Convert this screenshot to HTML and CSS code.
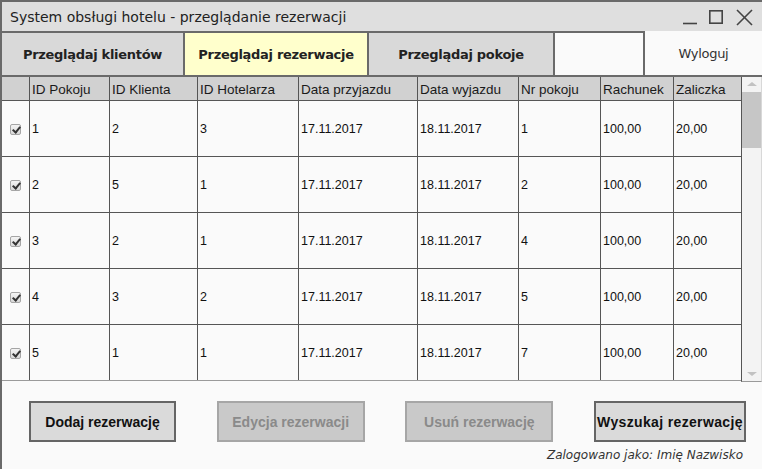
FILE: index.html
```html
<!DOCTYPE html>
<html lang="pl">
<head>
<meta charset="utf-8">
<title>System obsługi hotelu</title>
<link rel="stylesheet" href="styles.css">
</head>
<body>
<div class="window">
  <div class="titlebar">
    <span class="title">System obsługi hotelu - przeglądanie rezerwacji</span>
    <svg class="wincontrols" width="80" height="20" viewBox="0 0 80 20">
      <line x1="3" y1="16.5" x2="17" y2="16.5" stroke="#444" stroke-width="1.6"/>
      <rect x="29.8" y="3.8" width="12.4" height="12.4" fill="none" stroke="#444" stroke-width="1.6"/>
      <line x1="57" y1="3" x2="72" y2="18" stroke="#444" stroke-width="1.6"/>
      <line x1="72" y1="3" x2="57" y2="18" stroke="#444" stroke-width="1.6"/>
    </svg>
  </div>
  <div class="tabs">
    <div class="tab tab-1">Przeglądaj klientów</div>
    <div class="tab tab-2 active">Przeglądaj rezerwacje</div>
    <div class="tab tab-3">Przeglądaj pokoje</div>
    <div class="tab-gap"></div>
    <div class="logout">Wyloguj</div>
  </div>
  <div class="tablearea">
    <div class="grid">
      <div class="row head">
        <div class="cell"></div>
        <div class="cell">ID Pokoju</div>
        <div class="cell">ID Klienta</div>
        <div class="cell">ID Hotelarza</div>
        <div class="cell">Data przyjazdu</div>
        <div class="cell">Data wyjazdu</div>
        <div class="cell">Nr pokoju</div>
        <div class="cell">Rachunek</div>
        <div class="cell">Zaliczka</div>
      </div>
      <div class="row">
        <div class="cell cb"><span class="check"></span></div>
        <div class="cell">1</div><div class="cell">2</div><div class="cell">3</div>
        <div class="cell">17.11.2017</div><div class="cell">18.11.2017</div>
        <div class="cell">1</div><div class="cell">100,00</div><div class="cell">20,00</div>
      </div>
      <div class="row">
        <div class="cell cb"><span class="check"></span></div>
        <div class="cell">2</div><div class="cell">5</div><div class="cell">1</div>
        <div class="cell">17.11.2017</div><div class="cell">18.11.2017</div>
        <div class="cell">2</div><div class="cell">100,00</div><div class="cell">20,00</div>
      </div>
      <div class="row">
        <div class="cell cb"><span class="check"></span></div>
        <div class="cell">3</div><div class="cell">2</div><div class="cell">1</div>
        <div class="cell">17.11.2017</div><div class="cell">18.11.2017</div>
        <div class="cell">4</div><div class="cell">100,00</div><div class="cell">20,00</div>
      </div>
      <div class="row">
        <div class="cell cb"><span class="check"></span></div>
        <div class="cell">4</div><div class="cell">3</div><div class="cell">2</div>
        <div class="cell">17.11.2017</div><div class="cell">18.11.2017</div>
        <div class="cell">5</div><div class="cell">100,00</div><div class="cell">20,00</div>
      </div>
      <div class="row last">
        <div class="cell cb"><span class="check"></span></div>
        <div class="cell">5</div><div class="cell">1</div><div class="cell">1</div>
        <div class="cell">17.11.2017</div><div class="cell">18.11.2017</div>
        <div class="cell">7</div><div class="cell">100,00</div><div class="cell">20,00</div>
      </div>
    </div>
    <div class="scrollbar">
      <span class="arrow up"></span>
      <span class="thumb"></span>
      <span class="track"></span>
      <span class="arrow down"></span>
    </div>
  </div>
  <div class="actions">
    <button class="btn">Dodaj rezerwację</button>
    <button class="btn disabled">Edycja rezerwacji</button>
    <button class="btn disabled">Usuń rezerwację</button>
    <button class="btn wide">Wyszukaj rezerwację</button>
  </div>
  <div class="footer">Zalogowano jako: Imię Nazwisko</div>
</div>
</body>
</html>
```

FILE: styles.css
```css
* { box-sizing: border-box; }
html, body { margin: 0; padding: 0; }
body { width: 762px; height: 469px; overflow: hidden; background: #fafafa; }

.window {
  width: 762px;
  height: 469px;
  border-left: 2px solid #6a6a6a;
  border-top: 2px solid #6a6a6a;
  background: #fafafa;
  display: flex;
  flex-direction: column;
}

.titlebar {
  height: 31px;
  flex: none;
  background: #dfdfdf;
  border-bottom: 2px solid #6a6a6a;
  display: flex;
  align-items: center;
  justify-content: space-between;
  padding-left: 8px;
  padding-right: 2px;
}
.title {
  font-family: "DejaVu Sans", sans-serif;
  font-size: 14px;
  color: #222;
}
.wincontrols { display: block; margin-top: 1px; }

.tabs {
  height: 44px;
  flex: none;
  display: flex;
}
.tab {
  display: flex;
  align-items: center;
  justify-content: center;
  font-family: "DejaVu Sans", sans-serif;
  font-weight: bold;
  font-size: 13px;
  letter-spacing: -0.3px;
  color: #222;
  background: #d9d9d9;
  border-right: 2px solid #6a6a6a;
  border-bottom: 2px solid #6a6a6a;
  padding-top: 1px;
}
.tab-1 { width: 183px; }
.tab-2 { width: 184px; }
.tab-3 { width: 186px; }
.tab.active { background: #ffffcc; }
.tab-gap { width: 88px; background: #fafafa; border-bottom: 2px solid #6a6a6a; }
.logout {
  flex: 1;
  display: flex;
  align-items: center;
  justify-content: center;
  font-family: "DejaVu Sans", sans-serif;
  font-size: 13px;
  letter-spacing: -0.3px;
  color: #333;
  background: #fafafa;
  border-left: 2px solid #6a6a6a;
  border-bottom: 2px solid #6a6a6a;
  margin-top: -2px;
  padding-top: 1px;
}

.tablearea {
  display: flex;
  flex: none;
  height: 305px;
}
.grid { width: 739px; }
.row {
  display: grid;
  grid-template-columns: 27px 80px 88px 101px 119px 101px 82px 73px 68px;
  height: 56px;
  border-bottom: 1px solid #555;
  font-family: "Liberation Sans", Arial, sans-serif;
  font-size: 12.5px;
  color: #111;
}
.row.last { border-bottom-color: #9a9a9a; }
.row.head {
  height: 24px;
  background: #d1d1d1;
  font-size: 13.5px;
  color: #1a1a1a;
  border-bottom: 1px solid #555;
}
.cell {
  display: flex;
  align-items: center;
  padding-left: 2px;
  border-left: 1px solid #555;
  white-space: nowrap;
  overflow: hidden;
}
.row .cell:first-child { border-left: none; }
.row.head .cell { padding-top: 1px; }
.cell.cb { justify-content: center; padding-left: 0; padding-top: 2px; }
.check {
  width: 11px;
  height: 11px;
  border: 1px solid #a5a5a5;
  border-radius: 2px;
  background: linear-gradient(#f4f4f4, #d8d8d8);
  position: relative;
  margin-right: 1px;
}
.check::after {
  content: "";
  position: absolute;
  left: 3px;
  top: 0px;
  width: 3px;
  height: 6px;
  border-right: 2px solid #333;
  border-bottom: 2px solid #333;
  transform: rotate(40deg);
}

.scrollbar {
  width: 21px;
  border-left: 1px solid #555;
  border-right: 1px solid #d8d8d8;
  border-bottom: 1px solid #9a9a9a;
  background: #f3f3f3;
  display: flex;
  flex-direction: column;
  align-items: center;
  height: 305px;
}
.arrow {
  flex: none;
  width: 0;
  height: 0;
  border-left: 5px solid transparent;
  border-right: 5px solid transparent;
}
.arrow.up { border-bottom: 4px solid #c2c2c2; margin-top: 5px; margin-bottom: 6px; }
.arrow.down { border-top: 4px solid #c2c2c2; margin-top: 3px; margin-bottom: 5px; }
.thumb { flex: none; width: 19px; height: 56px; background: #c6c6c6; }
.track { flex: 1; }

.actions {
  display: flex;
  justify-content: space-between;
  padding: 19px 16px 0 27px;
  flex: none;
}
.btn {
  width: 147px;
  height: 41px;
  border: 2px solid #656565;
  background: #dadada;
  font-family: "Liberation Sans", Arial, sans-serif;
  font-weight: bold;
  font-size: 14px;
  color: #111;
  padding: 0;
  white-space: nowrap;
}
.btn.disabled {
  width: 148px;
  background: #c9c9c9;
  border-color: #a6a6a6;
  color: #8a8a8a;
}
.btn.wide { width: 152px; letter-spacing: 0.35px; }

.footer {
  text-align: right;
  padding-right: 19px;
  padding-top: 6px;
  font-family: "DejaVu Sans", sans-serif;
  font-style: italic;
  font-size: 12px;
  color: #333;
}
```
